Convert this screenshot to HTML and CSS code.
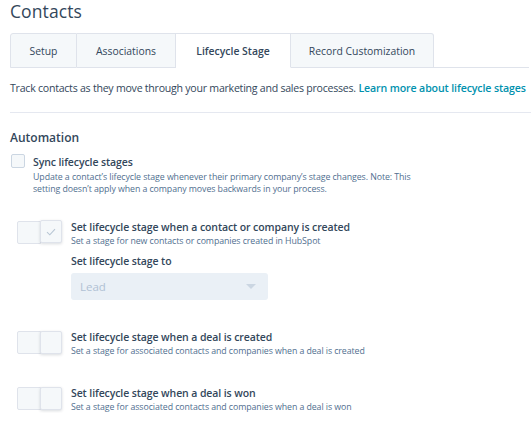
FILE: index.html
```html
<!DOCTYPE html>
<html>
<head>
<meta charset="utf-8">
<link rel="stylesheet" href="styles.css">
</head>
<body>
<div class="page">
  <h1 class="title">Contacts</h1>
  <div class="tabs">
    <div class="tab tab-setup">Setup</div>
    <div class="tab tab-assoc">Associations</div>
    <div class="tab tab-active">Lifecycle Stage</div>
    <div class="tab tab-record">Record Customization</div>
    <div class="tab-fill"></div>
  </div>
  <p class="intro">Track contacts as they move through your marketing and sales processes. <a class="link">Learn more about lifecycle stages</a></p>
  <hr class="rule">
  <h2 class="section">Automation</h2>
  <div class="sync">
    <span class="checkbox"></span>
    <div class="sync-text">
      <div class="label">Sync lifecycle stages</div>
      <div class="help wide">Update a contact’s lifecycle stage whenever their primary company’s stage changes. Note: This<br>setting doesn’t apply when a company moves backwards in your process.</div>
    </div>
  </div>

  <div class="option opt1">
    <div class="toggle on"><span class="half"></span><span class="knob"><svg width="10" height="8" viewBox="0 0 10 8"><path d="M1 4.2 L3.8 6.8 L9 1.2" fill="none" stroke="#b8c6d4" stroke-width="1.1"/></svg></span></div>
    <div class="opt-text">
      <div class="label">Set lifecycle stage when a contact or company is created</div>
      <div class="help">Set a stage for new contacts or companies created in HubSpot</div>
      <div class="label field-label">Set lifecycle stage to</div>
      <div class="select"><span>Lead</span><span class="caret"></span></div>
    </div>
  </div>

  <div class="option opt2">
    <div class="toggle"><span class="half"></span><span class="knob"></span></div>
    <div class="opt-text">
      <div class="label">Set lifecycle stage when a deal is created</div>
      <div class="help">Set a stage for associated contacts and companies when a deal is created</div>
    </div>
  </div>

  <div class="option opt3">
    <div class="toggle"><span class="half"></span><span class="knob"></span></div>
    <div class="opt-text">
      <div class="label">Set lifecycle stage when a deal is won</div>
      <div class="help">Set a stage for associated contacts and companies when a deal is won</div>
    </div>
  </div>
</div>
</body>
</html>
```
FILE: styles.css
```css
* { box-sizing: border-box; }
html, body { margin: 0; padding: 0; background: #fff; }
body {
  font-family: "Open Sans", "Noto Sans", "Liberation Sans", sans-serif;
  color: #33475b;
  overflow: hidden;
}
.page { padding: 0 0 0 10px; width: 531px; }
.title {
  margin: 0;
  height: 33px;
  font-size: 17.5px;
  font-weight: 400;
  line-height: 22px;
  letter-spacing: 0.1px;
}
.tabs { display: flex; height: 35px; }
.tab {
  display: flex; align-items: center; justify-content: center;
  background: #f5f8fa;
  border: 1px solid #dfe3eb;
  font-size: 10.4px;
  color: #33475b;
}
.tab-setup { width: 67px; border-right: 1px solid #dfe3eb; border-radius: 3px 0 0 0; }
.tab-assoc { width: 99px; border-left: none; }
.tab-active { width: 115px; background: #fff; border-left: none; border-right: 1px solid #dfe3eb; border-bottom: 1px solid #fff; font-weight: 600; }
.tab-record { width: 143px; border-left: none; border-radius: 0 3px 0 0; }
.tab-fill { flex: 1; border-bottom: 1px solid #dfe3eb; margin-right: 2px; }
.intro {
  margin: 13px 0 0 0;
  font-size: 10.6px;
  line-height: 14px;
  white-space: nowrap;
  letter-spacing: -0.25px;
}
.link { color: #0091ae; font-weight: 600; letter-spacing: -0.12px; }
.rule { margin: 17px 0 0 0; border: none; border-top: 1px solid #e5e8f0; }
.section { margin: 17px 0 0 0; font-size: 12px; font-weight: 600; line-height: 16px; }
.sync { display: flex; margin-top: 8px; }
.checkbox {
  width: 14px; height: 14px; margin: 0 0 0 1px;
  border: 1px solid #cbd6e2; border-radius: 2px; background: #f5f8fa;
  flex: none;
}
.sync-text { margin-left: 8px; }
.label { font-size: 10.5px; font-weight: 600; line-height: 16px; letter-spacing: -0.1px; }
.help { font-size: 8.8px; line-height: 12px; color: #516f90; letter-spacing: -0.08px; white-space: nowrap; }
.help.wide { margin-top: 1px; }
.option { display: flex; padding-left: 7px; }
.opt1 { margin-top: 24px; }
.toggle { display: flex; width: 45px; height: 23px; flex: none; margin-top: 2px; }
.toggle .half {
  width: 24px; height: 23px; background: #f5f8fa; border: 1px solid #dfe3eb; border-radius: 2px 0 0 2px;
}
.toggle .knob {
  width: 22px; height: 23px; margin-left: -1px; background: #f5f8fa; border: 1px solid #dfe3eb; border-radius: 2px;
  box-shadow: 0 1px 3px rgba(45,62,80,0.18);
  display: flex; align-items: center; justify-content: center;
}
.toggle.on .knob { margin-top: -1px; }
.opt-text { margin-left: 9px; }
.field-label { margin-top: 6px; }
.select {
  margin-top: 4px;
  width: 197px; height: 27px; background: #eaf0f6; border-radius: 3px;
  display: flex; align-items: center; justify-content: space-between;
  padding: 0 12px 0 9px;
  font-size: 11.5px; color: #b0c1d4;
}
.caret { width: 0; height: 0; border-left: 5px solid transparent; border-right: 5px solid transparent; border-top: 5px solid #cbd6e2; }
.opt2 { margin-top: 29px; }
.opt3 { margin-top: 28px; }
```
